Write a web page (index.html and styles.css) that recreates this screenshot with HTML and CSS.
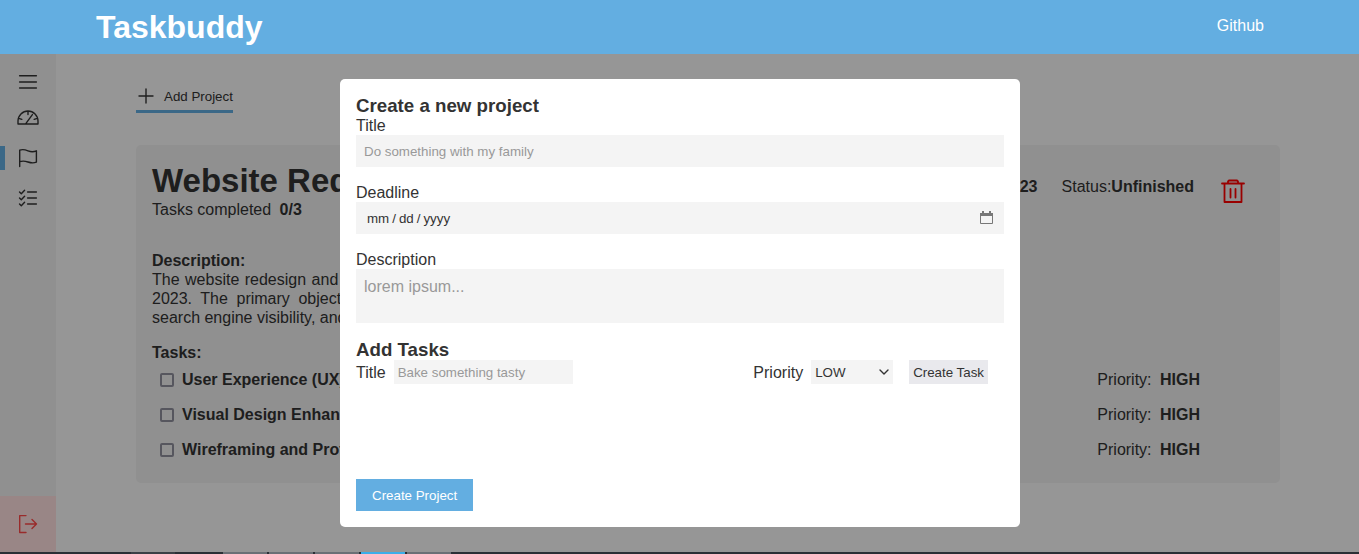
FILE: index.html
```html
<!DOCTYPE html>
<html lang="en">
<head>
<meta charset="utf-8">
<meta name="viewport" content="width=device-width, initial-scale=1">
<title>Taskbuddy</title>
<link rel="stylesheet" href="styles.css">
</head>
<body>
<header class="topbar">
  <h1 class="brand">Taskbuddy</h1>
  <a class="topbar-link" href="#">Github</a>
</header>

<div class="workspace">
  <nav class="sidebar" aria-label="Main">
    <button class="nav-item nav-menu" type="button" aria-label="Menu">
      <svg class="icon" viewBox="0 0 24 24"><path d="M3.6 5.700h16.800M3.600 12h16.800M3.600 18h16.800"/></svg>
    </button>
    <a class="nav-item" href="#" aria-label="Dashboard">
      <svg class="icon" viewBox="0 0 24 24"><path d="M2 18v-3a10 10 0 0 1 20 0v3zM12 5v3.6M2.8 12.3l3 1.1M21.2 12.3l-3 1.1M9.8 17.6l6.6-9"/></svg>
    </a>
    <a class="nav-item nav-active" href="#" aria-label="Projects">
      <svg class="icon" viewBox="0 0 24 24"><path d="M3.7 20.5V4.200c2.800-1.200 5.300-.6 8.300.6s5.700 1.200 8.400 0v11.300c-2.700 1.200-5.400.9-8.400-.1s-5.500-1.300-8.300-.3"/></svg>
    </a>
    <a class="nav-item" href="#" aria-label="Tasks">
      <svg class="icon" viewBox="0 0 24 24"><path d="M11.600 6h8.800M11.600 12h8.800M11.600 18h8.800M3.500 6l1.800 1.800 3.300-3.600M3.500 12l1.800 1.800 3.300-3.600M3.500 18l1.800 1.800 3.300-3.600"/></svg>
    </a>
    <button class="logout" type="button" aria-label="Log out">
      <svg class="icon" viewBox="0 0 24 24"><path d="M10 3.600H3.700v16.900H10M9.500 12h11M16 7.500l4.500 4.500-4.500 4.500"/></svg>
    </button>
  </nav>

  <main class="content">
    <button class="add-project" type="button">
      <svg class="icon-small" viewBox="0 0 20 20"><path d="M10 3v14M3 10h14"/></svg>
      Add Project
    </button>

    <article class="card">
      <div class="card-head">
        <div>
          <h2 class="card-title">Website Redesign</h2>
          <p class="progress">Tasks completed <strong>0/3</strong></p>
        </div>
        <div class="card-meta">
          <span>Deadline:<strong>12/31/2023</strong></span>
          <span>Status:<strong>Unfinished</strong></span>
          <button class="delete" type="button" aria-label="Delete project">
            <svg class="icon" viewBox="0 0 24 24"><path d="M1 4.500h22M3.500 4.500v18.500h17v-18.500M7 4.500v-2l1-1h8l1 1v2M9.500 10v8.500M14.500 10v8.500"/></svg>
          </button>
        </div>
      </div>

      <h3 class="label">Description:</h3>
      <p class="description">The website redesign and launch is planned for the end of December 2023. The primary objective is improving the user experience and search engine visibility, and the overall performance.</p>

      <h3 class="label">Tasks:</h3>
      <ul class="tasks">
        <li class="task"><label class="task-name"><input class="check" type="checkbox">User Experience (UX) Design</label><span class="priority">Priority: <strong>HIGH</strong></span></li>
        <li class="task"><label class="task-name"><input class="check" type="checkbox">Visual Design Enhancement</label><span class="priority">Priority: <strong>HIGH</strong></span></li>
        <li class="task"><label class="task-name"><input class="check" type="checkbox">Wireframing and Prototyping</label><span class="priority">Priority: <strong>HIGH</strong></span></li>
      </ul>
    </article>
  </main>

  <div class="overlay">
    <form class="modal" role="dialog" aria-labelledby="modal-title">
      <h3 class="modal-heading" id="modal-title">Create a new project</h3>
      <div class="field">
        <label for="title">Title</label>
        <input class="control" id="title" type="text" placeholder="Do something with my family">
      </div>
      <div class="field">
        <label for="deadline">Deadline</label>
        <div class="control date-control">
          <input class="date-input" id="deadline" type="date">
          <svg class="calendar" viewBox="0 0 14 14"><path class="calendar-frame" d="M1.500 2.500h12v10h-12z"/><path class="calendar-fill" d="M1 2h13v3H1zM3 0h2v2H3zM10 0h2v2h-2z"/></svg>
        </div>
      </div>
      <div class="field">
        <label for="description">Description</label>
        <textarea class="control control-area" id="description" placeholder="lorem ipsum..."></textarea>
      </div>
      <h3 class="modal-heading">Add Tasks</h3>
      <div class="task-form">
        <div class="inline-field">
          <label for="task-title">Title</label>
          <input class="compact task-title" id="task-title" type="text" placeholder="Bake something tasty">
        </div>
        <div class="inline-field">
          <label for="priority">Priority</label>
          <div class="select-wrap">
            <select class="compact select" id="priority"><option>LOW</option><option>MEDIUM</option><option>HIGH</option></select>
            <svg class="chevron" viewBox="0 0 10 10"><path d="M1 3l4 4 4-4"/></svg>
          </div>
          <button class="create-task" type="button">Create Task</button>
        </div>
      </div>
      <div class="new-tasks"></div>
      <button class="create-project" type="submit">Create Project</button>
    </form>
  </div>
</div>

<footer class="dock">
  <span class="dock-item dock-dim"></span>
  <span class="dock-item"></span>
  <span class="dock-item"></span>
  <span class="dock-item"></span>
  <span class="dock-item dock-current"></span>
  <span class="dock-item"></span>
</footer>
</body>
</html>
```

FILE: styles.css
```css
* {
  box-sizing: border-box;
  margin: 0;
  padding: 0;
}

body {
  display: flex;
  flex-direction: column;
  height: 100vh;
  overflow: hidden;
  background: #fafafa;
  color: #333;
  font-family: "Liberation Sans", Arial, sans-serif;
  font-size: 16px;
  line-height: 19px;
}

button,
input,
select,
textarea {
  border: 0;
  border-radius: 0;
  outline: 0;
  color: inherit;
  font-family: inherit;
}

button {
  background: none;
  cursor: pointer;
}

.topbar {
  display: flex;
  align-items: center;
  justify-content: space-between;
  padding: 8px 95px 8px 96px;
  background: #63aee1;
  color: #fff;
}

.brand {
  font-size: 32px;
  line-height: 38px;
}

.topbar-link {
  color: inherit;
  line-height: 20px;
  padding-bottom: 2px;
  text-decoration: none;
}

.workspace {
  position: relative;
  display: flex;
  flex: 1;
  min-height: 0;
}

.sidebar {
  display: flex;
  flex-direction: column;
  gap: 16px;
  width: 56px;
  padding-top: 16px;
  background: #f0f0f0;
}

.nav-item {
  display: flex;
  justify-content: center;
  color: inherit;
}

.nav-menu {
  margin-bottom: -4px;
}

.nav-active {
  border: solid #63aee1;
  border-width: 0 0 0 5px;
  padding-right: 5px;
}

.logout {
  display: flex;
  align-items: center;
  justify-content: center;
  height: 56px;
  margin-top: auto;
  background: #ffdfdf;
  color: #ff4848;
}

.icon {
  width: 24px;
  height: 24px;
}

.icon-small {
  width: 20px;
  height: 20px;
}

.icon,
.icon-small,
.chevron {
  fill: none;
  stroke: currentColor;
  stroke-width: 1.4;
  stroke-linecap: round;
  stroke-linejoin: round;
}

.content {
  flex: 1;
  min-width: 0;
  padding: 28px 79px 28px 80px;
}

.add-project {
  display: flex;
  align-items: center;
  gap: 8px;
  padding: 4px 0;
  border-bottom: 3px solid #63aee1;
}

.card {
  margin-top: 32px;
  padding: 16px;
  border-radius: 5px;
  background: #f0f0f0;
}

.card-head {
  display: flex;
  justify-content: space-between;
  margin-bottom: 32px;
}

.card-title {
  font-size: 33px;
  line-height: 39px;
}

.progress strong,
.priority strong {
  margin-left: 4px;
}

.card-meta {
  display: flex;
  align-items: flex-start;
  gap: 24px;
  padding: 16px 16px 0 0;
}

.delete {
  padding: 2px 3px;
  color: #f00;
}

.delete .icon {
  display: block;
  stroke-width: 1.8;
}

.label {
  font-size: 16px;
}

.description {
  width: 45%;
  margin-bottom: 16px;
  text-align: justify;
}

.tasks {
  list-style: none;
}

.task {
  display: flex;
  justify-content: space-between;
  padding: 8px 64px 8px 8px;
}

.task-name {
  display: flex;
  align-items: center;
  gap: 8px;
  font-weight: bold;
}

.check {
  width: 14px;
  height: 14px;
  border: 2px solid #8f8f9d;
  border-radius: 2px;
  appearance: none;
}

.overlay {
  position: absolute;
  inset: 0;
  display: flex;
  align-items: center;
  justify-content: center;
  padding-left: 1px;
  background: rgba(0, 0, 0, 0.4);
}

.modal {
  width: 50%;
  min-width: 680px;
  padding: 16px;
  border-radius: 5px;
  background: #fff;
}

.modal-heading {
  line-height: 21px;
}

.field {
  display: flex;
  flex-direction: column;
  margin-bottom: 16px;
}

.control {
  width: 100%;
  height: 32px;
  padding: 8px;
  background: #f4f4f4;
}

.control-area {
  height: 54px;
  font-size: 16px;
  line-height: 20px;
  resize: none;
}

::placeholder {
  color: #999;
}

.date-control {
  display: flex;
  align-items: center;
  padding: 0 11px;
}

.date-input {
  flex: 1;
  background: none;
}

.date-input::-webkit-calendar-picker-indicator {
  display: none;
}

.date-input::-webkit-datetime-edit-fields-wrapper,
.date-input::-webkit-datetime-edit-month-field,
.date-input::-webkit-datetime-edit-day-field,
.date-input::-webkit-datetime-edit-year-field {
  padding: 0;
}

.date-input::-webkit-datetime-edit-text {
  padding: 0 3px;
}

.calendar {
  width: 14px;
  height: 14px;
}

.calendar-frame {
  fill: none;
  stroke: #777;
}

.calendar-fill {
  fill: #777;
}

.task-form {
  display: flex;
  justify-content: space-between;
  padding-right: 16px;
}

.inline-field {
  display: flex;
  align-items: center;
  gap: 8px;
}

.compact {
  height: 24px;
  padding: 0 4px;
  background: #f4f4f4;
}

.task-title {
  width: 179px;
}

.select-wrap {
  position: relative;
}

.select {
  display: block;
  width: 82px;
  appearance: none;
}

.chevron {
  position: absolute;
  top: 7px;
  right: 4px;
  width: 10px;
  height: 10px;
  pointer-events: none;
}

.create-task {
  height: 24px;
  margin-left: 8px;
  padding: 0 4px;
  background: #e9e9ed;
}

.new-tasks {
  min-height: 95px;
}

.create-project {
  display: block;
  height: 32px;
  padding: 0 16px;
  background: #63aee1;
  color: #fff;
}

.dock {
  display: flex;
  gap: 2px;
  height: 2px;
  padding-left: 131px;
  background: #2b3036;
}

.dock-item {
  width: 44px;
  background: #6b7076;
}

.dock-dim {
  margin-right: 46px;
  background: #3b4046;
}

.dock-current {
  background: #3daee9;
}
```
